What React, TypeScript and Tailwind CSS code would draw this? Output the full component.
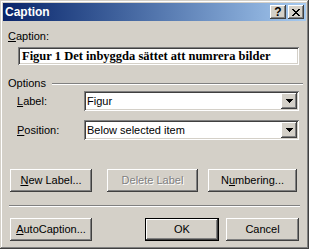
const raised =
  "shadow-[inset_-1px_-1px_#404040,inset_1px_1px_#ffffff,inset_-2px_-2px_#808080,inset_2px_2px_#d4d0c8]";
const sunken =
  "shadow-[inset_1px_1px_#808080,inset_-1px_-1px_#ffffff,inset_2px_2px_#404040,inset_-2px_-2px_#d4d0c8]";

const Btn = ({
  children,
  width,
  isDefault,
  disabled,
}: {
  children: React.ReactNode;
  width: string;
  isDefault?: boolean;
  disabled?: boolean;
}) => (
  <div
    className={`${width} h-[23px] flex items-center justify-center bg-[#d4d0c8] ${
      isDefault
        ? "shadow-[inset_0_0_0_1px_#000000,inset_-2px_-2px_#404040,inset_2px_2px_#ffffff,inset_-3px_-3px_#808080]"
        : raised
    } ${disabled ? "text-[#808080] [text-shadow:1px_1px_0_#ffffff]" : "text-black"}`}
  >
    {children}
  </div>
);

const Select = ({ value }: { value: string }) => (
  <div className={`w-[215px] h-[20px] bg-white ${sunken} flex items-center pl-[3px] pr-[2px]`}>
    <span className="flex-1 leading-[13px]">{value}</span>
    <div className={`w-[16px] h-[16px] bg-[#d4d0c8] ${raised} flex items-center justify-center`}>
      <svg width="7" height="4" viewBox="0 0 7 4">
        <path d="M0 0h7v1H0zM1 1h5v1H1zM2 2h3v1H2zM3 3h1v1H3z" fill="#000" />
      </svg>
    </div>
  </div>
);

const TitleButton = ({ children }: { children: React.ReactNode }) => (
  <div className={`w-[16px] h-[14px] bg-[#d4d0c8] ${raised} flex items-center justify-center`}>
    {children}
  </div>
);

export default function App() {
  return (
    <div
      className="w-[309px] h-[249px] bg-[#d4d0c8] p-[3px] text-[11px] text-black shadow-[inset_-1px_-1px_#404040,inset_1px_1px_#d4d0c8,inset_-2px_-2px_#808080,inset_2px_2px_#ffffff] flex flex-col"
      style={{ fontFamily: '"Liberation Sans", Arial, sans-serif' }}
    >
      <div className="h-[18px] bg-gradient-to-r from-[#0a246a] to-[#a6caf0] flex items-center pl-[2px] pr-[2px]">
        <span className="flex-1 text-white font-bold text-[12px] leading-[14px]">Caption</span>
        <div className="flex gap-[2px]">
          <TitleButton>
            <span className="font-bold text-[12px] leading-[11px] mt-[1px]">?</span>
          </TitleButton>
          <TitleButton>
            <svg width="8" height="7" viewBox="0 0 8 7">
              <path
                d="M0 0h2v1H0zM6 0h2v1H6zM1 1h2v1H1zM5 1h2v1H5zM2 2h4v1H2zM3 3h2v1H3zM2 4h4v1H2zM1 5h2v1H1zM5 5h2v1H5zM0 6h2v1H0zM6 6h2v1H6z"
                fill="#000"
              />
            </svg>
          </TitleButton>
        </div>
      </div>

      <div className="mt-[9px] ml-[5px] h-[13px] leading-[13px]">
        <span className="underline">C</span>aption:
      </div>
      <div
        className={`mt-[4px] ml-[15px] w-[281px] h-[18px] bg-white ${sunken} flex items-center pl-[4px]`}
      >
        <span
          className="font-bold text-[12.5px] leading-[14px]"
          style={{ fontFamily: '"Liberation Serif", "Times New Roman", serif' }}
        >
          Figur 1 Det inbyggda sättet att numrera bilder
        </span>
      </div>

      <div className="mt-[12px] ml-[5px] mr-[3px] h-[13px] flex items-center gap-[6px]">
        <span className="leading-[13px]">Options</span>
        <div className="flex-1 border-t border-t-[#808080] border-b border-b-white h-[2px]" />
      </div>

      <div className="mt-[1px] ml-[14px] flex items-center h-[20px]">
        <span className="w-[67px]">
          <span className="underline">L</span>abel:
        </span>
        <Select value="Figur" />
      </div>
      <div className="mt-[9px] ml-[14px] flex items-center h-[20px]">
        <span className="w-[67px]">
          <span className="underline">P</span>osition:
        </span>
        <Select value="Below selected item" />
      </div>

      <div className="mt-[29px] ml-[7px] flex">
        <Btn width="w-[82px]">
          <span className="underline">N</span>ew Label...
        </Btn>
        <div className="ml-[15px]">
          <Btn width="w-[91px]" disabled>
            Delete Label
          </Btn>
        </div>
        <div className="ml-[10px]">
          <Btn width="w-[89px]">
            N<span className="underline">u</span>mbering...
          </Btn>
        </div>
      </div>

      <div className="mt-[13px] ml-[6px] w-[291px] h-[2px] border-t border-t-[#808080] border-b border-b-white" />

      <div className="mt-[11px] ml-[7px] flex">
        <Btn width="w-[82px]">
          <span className="underline">A</span>utoCaption...
        </Btn>
        <div className="ml-[53px]">
          <Btn width="w-[74px]" isDefault>
            OK
          </Btn>
        </div>
        <div className="ml-[7px]">
          <Btn width="w-[73px]">Cancel</Btn>
        </div>
      </div>
    </div>
  );
}
